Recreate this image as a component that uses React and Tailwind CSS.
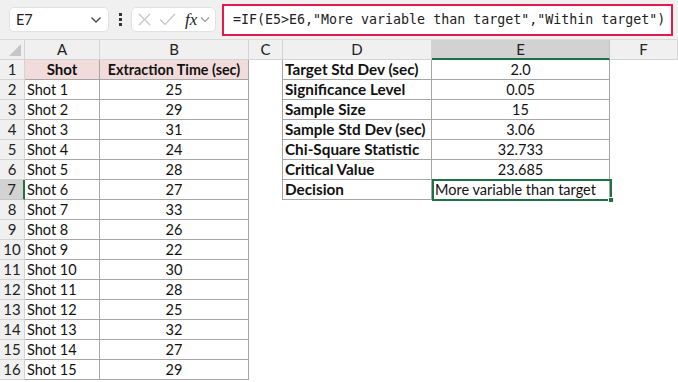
import React from "react";

const shots = [25, 29, 31, 24, 28, 27, 33, 26, 22, 30, 28, 25, 32, 27, 29];
const stats = [
  ["Target Std Dev (sec)", "2.0"],
  ["Significance Level", "0.05"],
  ["Sample Size", "15"],
  ["Sample Std Dev (sec)", "3.06"],
  ["Chi-Square Statistic", "32.733"],
  ["Critical Value", "23.685"],
  ["Decision", "More variable than target"],
];

const cols = "grid-cols-[25px_75px_149px_34px_149px_178px_68px]";

function TopBar() {
  return (
    <div className="h-[40px] bg-[#f0f0f0] flex items-center relative border-b border-[#dadada]">
      <div className="ml-[9px] w-[100px] h-[25px] bg-white rounded-[5px] border border-[#e2e2e2] flex items-center justify-between pl-[6px] pr-[6px]">
        <span className="text-[14.5px] text-[#222]">E7</span>
        <svg width="12" height="8" viewBox="0 0 12 8"><path d="M1.5 1.5 L6 6 L10.5 1.5" fill="none" stroke="#444" strokeWidth="1.3" /></svg>
      </div>
      <div className="w-[22px] flex flex-col items-center gap-[2px]">
        <div className="w-[3px] h-[3px] bg-[#333]" />
        <div className="w-[3px] h-[3px] bg-[#333]" />
        <div className="w-[3px] h-[3px] bg-[#333]" />
      </div>
      <div className="w-[85px] h-[25px] bg-white rounded-[5px] border border-[#e2e2e2] flex items-center pl-[5px]">
        <svg className="ml-[1px]" width="13" height="13" viewBox="0 0 13 13"><path d="M1 1 L12 12 M12 1 L1 12" stroke="#c4c4c4" strokeWidth="1.2" /></svg>
        <svg className="ml-[8px]" width="17" height="13" viewBox="0 0 17 13"><path d="M1 6.5 L6 11.5 L16 1" fill="none" stroke="#c4c4c4" strokeWidth="1.2" /></svg>
        <span className="ml-[9px] text-[17px] italic text-[#222] leading-none" style={{ fontFamily: '"Liberation Serif", serif' }}>fx</span>
        <svg className="ml-[3px]" width="10" height="7" viewBox="0 0 10 7"><path d="M1 1.5 L5 5.5 L9 1.5" fill="none" stroke="#999" strokeWidth="1.1" /></svg>
      </div>
      <div className="ml-[6px] w-[451px] h-[32px] bg-white border-2 border-[#e5194e] flex items-center pl-[9px]">
        <span className="text-[13.3px] text-[#222] whitespace-pre" style={{ fontFamily: '"DejaVu Sans Mono", "Liberation Mono", monospace' }}>
          =IF(E5&gt;E6,"More variable than target","Within target")
        </span>
      </div>
    </div>
  );
}

function App() {
  const headers = ["A", "B", "C", "D", "E", "F"];
  const rows = [];
  for (let r = 1; r <= 16; r++) rows.push(r);

  return (
    <div className="w-[678px] h-[382px] overflow-hidden bg-white text-[#111]" style={{ fontFamily: 'Lato, "Liberation Sans", sans-serif' }}>
      <TopBar />
      <div className="relative">
        <div className={`grid ${cols} auto-rows-[20px]`}>
          <div className="bg-[#f0f0f0] border-r border-b border-[#d4d4d4] relative">
            <svg className="absolute right-[3px] bottom-[3px]" width="12" height="12" viewBox="0 0 12 12"><path d="M12 0 L12 12 L0 12 Z" fill="#c6c6c6" /></svg>
          </div>
          {headers.map((h) => (
            <div
              key={h}
              className={
                h === "E"
                  ? "bg-[#d2d2d2] border-r border-[#c4c4c4] border-b-2 border-b-[#1e7145] flex items-center justify-center text-[15px] text-[#222]"
                  : "bg-[#f0f0f0] border-r border-b border-[#d4d4d4] flex items-center justify-center text-[15px] text-[#222]"
              }
            >
              {h}
            </div>
          ))}
          {rows.map((r) => {
            const isSel = r === 7;
            const cells = [];
            cells.push(
              <div
                key={`h${r}`}
                className={
                  isSel
                    ? "bg-[#d2d2d2] border-b border-[#c4c4c4] border-r-2 border-r-[#1e7145] flex items-center justify-center text-[15px] text-[#222]"
                    : "bg-[#f0f0f0] border-r border-b border-[#d4d4d4] flex items-center justify-center text-[15px] text-[#222]"
                }
              >
                {r}
              </div>
            );
            if (r === 1) {
              cells.push(
                <div key="a" className="bg-[#f2dcdb] border-r border-b border-[#a6a6a6] flex items-center justify-center font-bold text-[15px]">Shot</div>,
                <div key="b" className="bg-[#f2dcdb] border-r border-b border-[#a6a6a6] flex items-center justify-center font-bold text-[14.3px] whitespace-nowrap">Extraction Time (sec)</div>
              );
            } else {
              cells.push(
                <div key="a" className="border-r border-b border-[#a6a6a6] flex items-center pl-[2px] text-[14.5px] whitespace-nowrap">Shot {r - 1}</div>,
                <div key="b" className="border-r border-b border-[#a6a6a6] flex items-center justify-center text-[14.5px]">{shots[r - 2]}</div>
              );
            }
            const inStats = r <= 7;
            cells.push(<div key="c" className={inStats ? "border-r border-[#a6a6a6]" : ""} />);
            if (inStats) {
              const [label, val] = stats[r - 1];
              cells.push(
                <div key="d" className="border-r border-b border-[#a6a6a6] flex items-center pl-[2px] font-bold text-[15.3px] whitespace-nowrap">{label}</div>,
                <div key="e" className={`border-r border-b border-[#a6a6a6] flex items-center text-[14.5px] whitespace-nowrap ${r === 7 ? "pl-[3px]" : "justify-center"}`}>{val}</div>
              );
            } else {
              cells.push(<div key="d" />, <div key="e" />);
            }
            cells.push(<div key="f" />);
            return cells;
          })}
        </div>
        <div className="absolute left-[432px] top-[139px] w-[180px] h-[22px] border-2 border-[#1e7145] pointer-events-none">
          <div className="absolute right-[-4px] bottom-[-4px] w-[6px] h-[6px] bg-[#1e7145] border border-white" />
        </div>
      </div>
    </div>
  );
}

export default App;
